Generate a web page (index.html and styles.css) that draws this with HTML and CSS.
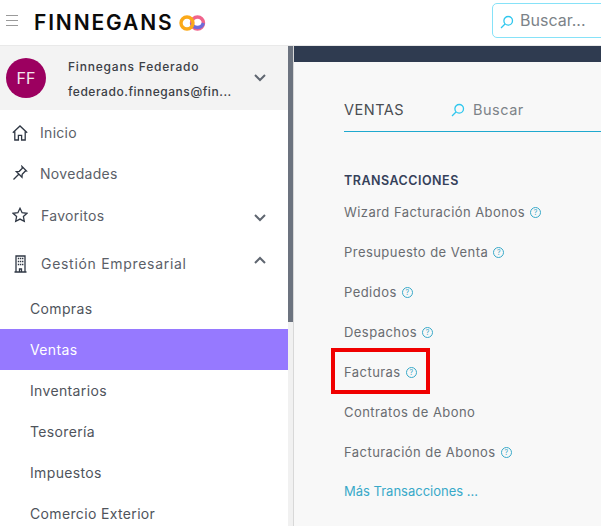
FILE: index.html
```html
<!DOCTYPE html>
<html lang="es">
<head>
    <meta charset="UTF-8">
    <meta name="viewport" content="width=device-width, initial-scale=1.0">
    <title>Finnegans - Ventas</title>
    <link rel="stylesheet" href="styles.css">
</head>
<body>

<!-- Barra superior -->
<header class="topbar">
    <div class="burger"><span></span><span></span><span></span></div>
    <span class="brand">FINNEGANS</span>
    <svg class="brand-mark" width="28" height="18" viewBox="0 0 28 18">
        <circle cx="18.5" cy="9" r="6" fill="none" stroke="#f0648c" stroke-width="3.4"/>
        <path d="M12.7 9a6 6 0 0 0 11.6 0" fill="none" stroke="#6f6bd8" stroke-width="3.4"/>
        <circle cx="8" cy="9" r="6" fill="none" stroke="#fba919" stroke-width="3.4"/>
    </svg>
    <div class="top-search">
        <svg class="lens" width="14" height="14" viewBox="0 0 14 14"><circle cx="8.2" cy="5.8" r="4.3"/><path d="M5 9 1 13"/></svg>
        <span>Buscar...</span>
    </div>
</header>

<div class="main">
    <!-- Menu lateral -->
    <aside class="sidebar">
        <div class="side-scroll">
            <div class="user">
                <div class="avatar">FF</div>
                <div class="user-info">
                    <div class="user-name">Finnegans Federado</div>
                    <div class="user-mail">federado.finnegans@fin...</div>
                </div>
                <svg class="chevron" width="12" height="8" viewBox="0 0 12 8"><path d="M1 1l5 5 5-5"/></svg>
            </div>

            <a class="item item-inicio">
                <svg class="icon" width="16" height="16" viewBox="0 0 16 16"><path d="M.8 7.8 8 1l7.2 6.8M2.8 6.500V15h3.600v-4.600h3.200V15h3.600V6.500"/></svg>
                <span>Inicio</span>
            </a>
            <a class="item item-novedades">
                <svg class="icon" width="16" height="16" viewBox="0 0 16 16"><path d="M10 1.500 14.500 6l-1.300.2-3 3-.2 3-5.700-5.700 3-.2 3-3zM6.500 9.500 1.500 14.500"/></svg>
                <span>Novedades</span>
            </a>
            <a class="item item-favoritos">
                <svg class="icon" width="16" height="16" viewBox="0 0 16 16"><path d="m8 1.300 2.100 4.400 4.800.6-3.500 3.300.9 4.800L8 12.100l-4.300 2.300.9-4.800L1.100 6.300l4.800-.6z"/></svg>
                <span>Favoritos</span>
                <svg class="chevron" width="12" height="8" viewBox="0 0 12 8"><path d="M1 1l5 5 5-5"/></svg>
            </a>
            <a class="item item-gestion">
                <svg class="icon" width="16" height="18" viewBox="0 0 16 18">
                    <path d="M4 17V1h9v16M2.500 17h12M7.500 17v-3h2v3"/>
                    <path class="windows" d="M5.800 3.500h1.400M7.900 3.500h1.400M10 3.500h1.400M5.800 6.500h1.400M7.900 6.500h1.400M10 6.500h1.400M5.800 9.500h1.400M7.900 9.500h1.400M10 9.500h1.400"/>
                </svg>
                <span>Gestión Empresarial</span>
                <svg class="chevron chevron-up" width="12" height="8" viewBox="0 0 12 8"><path d="M1 7l5-5 5 5"/></svg>
            </a>

            <a class="sub">Compras</a>
            <a class="sub active">Ventas</a>
            <a class="sub">Inventarios</a>
            <a class="sub">Tesorería</a>
            <a class="sub">Impuestos</a>
            <a class="sub">Comercio Exterior</a>
        </div>
        <div class="scrollbar"><div class="thumb"></div></div>
    </aside>

    <!-- Contenido -->
    <section class="content">
        <div class="dark-band"></div>
        <div class="panel">
            <div class="panel-head">
                <h1>VENTAS</h1>
                <svg class="lens" width="14" height="14" viewBox="0 0 14 14"><circle cx="8.2" cy="5.800" r="4.300"/><path d="M5 9 1 13"/></svg>
                <span class="panel-search">Buscar</span>
            </div>
            <div class="panel-rule"></div>

            <h2>TRANSACCIONES</h2>
            <ul class="links">
                <li>Wizard Facturación Abonos <i class="help">?</i></li>
                <li>Presupuesto de Venta <i class="help">?</i></li>
                <li>Pedidos <i class="help">?</i></li>
                <li>Despachos <i class="help">?</i></li>
                <li>Facturas <i class="help">?</i></li>
                <li>Contratos de Abono</li>
                <li>Facturación de Abonos <i class="help">?</i></li>
                <li class="more">Más Transacciones ...</li>
            </ul>
            <div class="red-mark"></div>
        </div>
    </section>
</div>

</body>
</html>
```

FILE: styles.css
```css
html, body {
    margin: 0;
    padding: 0;
    height: 526px;
    overflow: hidden;
}
body {
    font-family: Inter, "Open Sans", sans-serif;
    color: #4a4f57;
    background: #fff;
}

/* Barra superior */
.topbar {
    height: 45px;
    display: flex;
    align-items: center;
    background: #fff;
    border-bottom: 1px solid #e9e9e9;
    position: relative;
}
.burger {
    width: 12px;
    margin: 0 0 5px 6px;
    display: flex;
    flex-direction: column;
    gap: 4px;
}
.burger span {
    height: 1px;
    background: #9a9a9a;
}
.brand {
    margin-left: 16px;
    font-size: 21px;
    font-weight: 600;
    color: #0b0b0b;
    letter-spacing: 1.85px;
}
.brand-mark {
    margin-left: 6px;
    flex: none;
}
.top-search {
    position: absolute;
    left: 492px;
    top: 3px;
    width: 130px;
    height: 33px;
    border: 1px solid #86e2f8;
    border-radius: 5px;
    display: flex;
    align-items: center;
    font-size: 16px;
    color: #7c8388;
}
.top-search span {
    margin: -2px 0 0 -1px;
}
.top-search .lens {
    margin: 3px 7px 0 7px;
}
.lens {
    flex: none;
}
.lens circle, .lens path {
    fill: none;
    stroke: #2fc7ee;
    stroke-width: 1.300;
}

.main {
    display: flex;
    height: 480px;
}

/* Menu lateral */
.sidebar {
    width: 293px;
    flex: none;
    display: flex;
    border-right: 1px solid #d8d8d8;
}
.side-scroll {
    width: 288px;
    flex: none;
}
.scrollbar {
    width: 5px;
    background: #f1f1f1;
}
.thumb {
    height: 276px;
    background: #6c737f;
}
.user {
    height: 64px;
    background: #f3f3f3;
    display: flex;
    align-items: center;
}
.avatar {
    width: 40px;
    height: 40px;
    margin-left: 6px;
    border-radius: 50%;
    background: #9c0060;
    color: #f4e6ee;
    font-size: 16px;
    line-height: 40px;
    text-align: center;
}
.user-info {
    margin: 2px 0 0 22px;
    font-size: 12px;
    font-weight: 500;
    line-height: 25px;
    color: #3c4046;
}
.user-name {
    letter-spacing: .8px;
}
.user-mail {
    letter-spacing: .55px;
}
.chevron {
    margin-left: auto;
    margin-right: 22px;
    flex: none;
}
.chevron path {
    fill: none;
    stroke: #5f6670;
    stroke-width: 2;
}
.item {
    display: flex;
    align-items: center;
    padding-left: 12px;
    font-size: 14px;
    letter-spacing: .3px;
    color: #5b6068;
}
.item-inicio {
    height: 41px;
    margin-top: 2px;
}
.item-novedades {
    height: 40px;
}
.item-favoritos {
    height: 44px;
}
.item-favoritos .chevron {
    margin-top: 5px;
}
.item-gestion {
    height: 51px;
    box-sizing: border-box;
    padding-top: 2px;
    letter-spacing: .7px;
}
.chevron-up {
    margin-bottom: 7px;
}
.icon {
    flex: none;
    width: 16px;
}
.icon path {
    fill: none;
    stroke: #2f3744;
    stroke-width: 1.300;
}
.icon .windows {
    stroke-width: 1.600;
}
.item span {
    margin-left: 12px;
}
.item-favoritos span, .item-gestion span {
    margin-left: 13px;
}
.sub {
    display: block;
    height: 41px;
    line-height: 41px;
    padding-left: 30px;
    font-size: 14px;
    letter-spacing: .35px;
    color: #4f545c;
}
.sub.active {
    background: #9679ff;
    color: #fff;
}

/* Contenido */
.content {
    flex: 1;
    min-width: 0;
    background: #f8f8f8;
}
.dark-band {
    height: 16px;
    background: #2f3b50;
}
.panel {
    position: relative;
    padding-left: 50px;
}
.panel-head {
    display: flex;
    align-items: center;
    height: 43px;
    padding-top: 26px;
}
.panel-head h1 {
    width: 107px;
    margin: 0;
    font-size: 14.500px;
    font-weight: 400;
    letter-spacing: .5px;
    color: #4a4d52;
}
.panel-search {
    margin-left: 8px;
    font-size: 14.500px;
    letter-spacing: .5px;
    color: #7c8388;
}
.panel-rule {
    height: 1px;
    background: #1fa9cf;
}
.panel h2 {
    margin: 41px 0 0;
    font-size: 12.500px;
    font-weight: 600;
    line-height: 16px;
    letter-spacing: .5px;
    color: #35415a;
}
.links {
    list-style: none;
    margin: 3px 0 0;
    padding: 0;
}
.links li {
    height: 40px;
    line-height: 40px;
    font-size: 13px;
    letter-spacing: .45px;
    color: #696c71;
}
.links .more {
    height: 38px;
    line-height: 38px;
    letter-spacing: 0;
    color: #38a9c9;
}
.help {
    display: inline-block;
    width: 9px;
    height: 9px;
    margin-left: 1px;
    border: 1px solid #38a9c9;
    border-radius: 50%;
    color: #38a9c9;
    font-size: 7px;
    font-style: normal;
    line-height: 9px;
    letter-spacing: 0;
    text-align: center;
    vertical-align: 2px;
}
.red-mark {
    position: absolute;
    left: 37px;
    top: 286px;
    width: 91px;
    height: 38px;
    border: 4px solid #f00000;
}
```
